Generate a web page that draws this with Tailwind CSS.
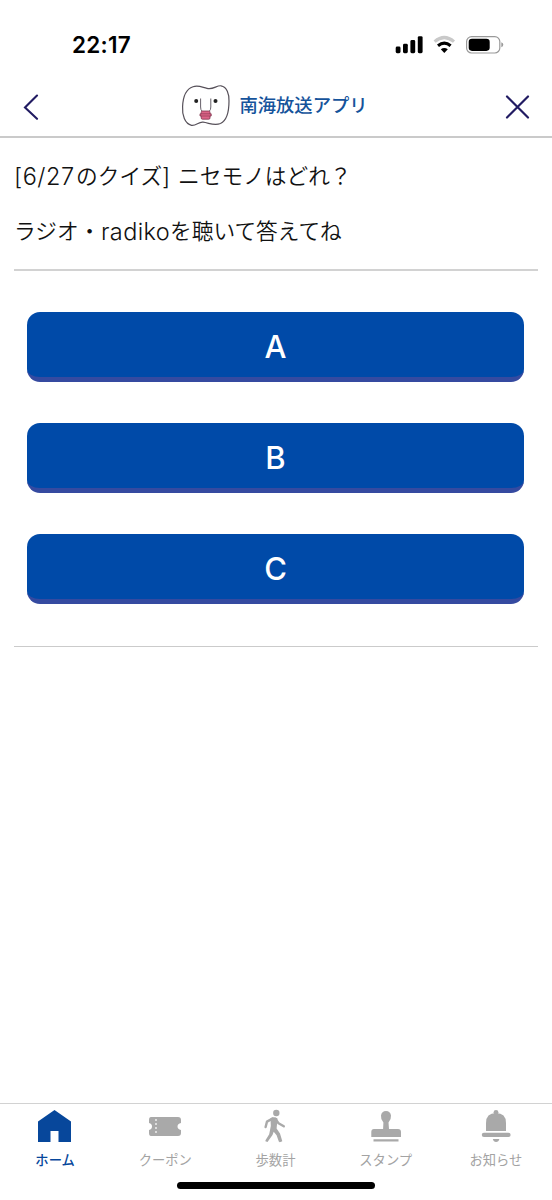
<!DOCTYPE html>
<html lang="ja">
<head>
<meta charset="utf-8">
<title>南海放送アプリ</title>
<script src="https://cdn.jsdelivr.net/npm/@tailwindcss/browser@4"></script>
</head>
<body class="bg-white">
<div class="flex h-[1200px] w-[552px] flex-col overflow-hidden bg-white font-['Noto_Sans_CJK_JP',sans-serif] text-[#111]">
  <div class="flex h-[76px] shrink-0 items-center justify-between pt-[14px] pr-[48px] pl-[72px]">
    <span class="font-[Inter,sans-serif] text-[22.5px] leading-none font-semibold tracking-[.25px] text-black">22:17</span>
    <svg class="h-[20px] w-[109px]" viewBox="395 35 109 20">
      <g fill="#000"><rect x="395.7" y="46.5" width="4.8" height="6.7" rx="1.4"/><rect x="403" y="43.8" width="4.8" height="9.4" rx="1.4"/><rect x="410.4" y="40" width="4.8" height="13.2" rx="1.4"/><rect x="417.8" y="36.2" width="4.8" height="17" rx="1.4"/></g>
      <g fill="none"><path d="M434.6 41.6Q444.3 33.4 454 41.6" stroke="#c9c9c9" stroke-width="3.2"/><path d="M438 45.8Q444.3 40.5 450.6 45.8" stroke="#000" stroke-width="3.1"/></g>
      <path d="M440.8 49.2Q444.3 46.6 447.8 49.2L444.3 53Z" fill="#000"/>
      <rect x="466.6" y="36.6" width="33.2" height="16.4" rx="5" fill="none" stroke="#999" stroke-width="1.2"/>
      <rect x="468.7" y="38.7" width="21" height="12.2" rx="3.3" fill="#000"/>
      <path d="M501.3 42.3q2 .9 2 2.5t-2 2.5z" fill="#999"/>
    </svg>
  </div>
  <header class="flex h-[62px] shrink-0 items-center justify-between border-b-2 border-[#cacaca] pr-[22px] pl-[23px]">
    <svg class="h-[28px] w-[17px]" viewBox="0 0 17 28" fill="none" stroke="#211b62" stroke-width="2.1" stroke-linecap="round"><path d="M14 3.5 2 15.5 14 26.8"/></svg>
    <div class="flex items-center pl-[3px]">
      <svg class="h-[46px] w-[52px]" viewBox="180 83 52 46">
        <path d="M207 88.3C213 90 216.5 85.3 221 85.8C227 86.8 229.2 94 229 101C229 110 226.8 120.5 220.5 123.5C214 126 209 122.8 203 122.2C198.5 121.7 196.2 126 191.5 125.3C184.8 124 182 115 182.6 106.5C183 97 186 89 193 86.7C198.5 85 202 87.2 207 88.3Z" fill="#fff" stroke="#57515a" stroke-width="1.2"/>
        <path d="M200.6 98.5V107Q200.6 110 202 111M210.8 98.5V107Q210.8 110 209.4 111" fill="none" stroke="#67616a" stroke-width="1"/>
        <circle cx="196.2" cy="101" r="2" fill="#222"/><circle cx="215.5" cy="101" r="2" fill="#222"/>
        <path d="M202.4 111H208.8Q210 111 210 112.2V113.8H211.2V116H210V118Q210 119.2 208.8 119.2H202.4Q201.2 119.2 201.2 118V116H200V113.8H201.2V112.2Q201.2 111 202.4 111Z" fill="#dd6488" stroke="#80344d" stroke-width=".8"/>
        <path d="M201 113.8H210.2M201 116H210.2" stroke="#8c3a55" stroke-width=".7"/>
      </svg>
      <span class="mb-[3px] ml-[8px] text-[18.3px] leading-none font-medium text-[#15539b]">南海放送アプリ</span>
    </div>
    <svg class="h-[28px] w-[26px]" viewBox="0 0 26 28" fill="none" stroke="#211b62" stroke-width="2.2" stroke-linecap="round"><path d="M3 4.5 24 25.5M24 4.5 3 25.5"/></svg>
  </header>
  <main class="flex-1 px-[14px]">
    <div class="h-[133px] border-b-2 border-[#d2d2d2] pt-[9px] text-[21.7px] leading-[55px] font-[350] whitespace-nowrap">
      <p class="flex h-[55px]"><span class="w-[62px] pt-[2px] font-[Inter,sans-serif] text-[23.5px] font-[350] tracking-[.5px]">[6/27</span><span class="w-[86px]">のクイズ</span><span class="w-[16px] pt-[2px] font-[Inter,sans-serif] text-[23.5px] font-[350]">]</span><span>ニセモノはどれ？</span></p>
      <p class="flex h-[55px]"><span class="w-[87px]">ラジオ・</span><span class="w-[69px] pt-[2px] font-[Inter,sans-serif] text-[23.5px] font-[350] tracking-[.4px]">radiko</span><span>を聴いて答えてね</span></p>
    </div>
    <div class="flex h-[376px] flex-col gap-[41px] border-b border-[#cbcbcb] px-[13px] pt-[41px] font-[Inter,sans-serif] text-[31px] font-medium text-white">
      <button class="flex h-[70px] w-[497px] items-center justify-center rounded-[13px] border-b-[5px] border-[#354aa0] bg-[#004aa8] pt-[5px]">A</button>
      <button class="flex h-[70px] w-[497px] items-center justify-center rounded-[13px] border-b-[5px] border-[#354aa0] bg-[#004aa8] pt-[5px]">B</button>
      <button class="flex h-[70px] w-[497px] items-center justify-center rounded-[13px] border-b-[5px] border-[#354aa0] bg-[#004aa8] pt-[5px]">C</button>
    </div>
  </main>
  <footer class="flex h-[97px] shrink-0 flex-col items-center border-t border-[#d2d2d2]">
    <nav class="grid h-[78px] w-full grid-cols-5 pr-px text-[13.3px] leading-[20px] text-[#a3a3a3]">
      <div class="flex flex-col items-center pt-[4px] font-medium text-[#07479b]">
        <svg class="h-[38px] w-[44px]" viewBox="0 0 44 38" fill="currentColor"><path d="M5 13.5 21.5 2 38 13.5V34H25.5V23H17.5V34H5Z"/></svg><span class="mt-[4px]">ホーム</span>
      </div>
      <div class="flex flex-col items-center pt-[4px]">
        <svg class="h-[38px] w-[44px]" viewBox="0 0 44 38"><path d="M8 9H35Q38 9 38 12V15Q34.5 15.8 34.5 18.5T38 22V25Q38 28 35 28H8Q6 28 6 25V22Q9 21.2 9 18.5T6 15V12Q6 9 8 9Z" fill="#a9a9a9"/><path d="M13 11V27" stroke="#fff" stroke-width="1.2" stroke-dasharray="2 2"/></svg><span class="mt-[4px]">クーポン</span>
      </div>
      <div class="flex flex-col items-center pt-[4px]">
        <svg class="h-[38px] w-[44px]" viewBox="0 0 44 38"><circle cx="23.3" cy="5" r="3.2" fill="#a9a9a9"/><path d="M19.5 10.6 14 13.6 12.6 19M22.5 11 25.5 15.2 30.8 18.3" fill="none" stroke="#a9a9a9" stroke-width="2.4" stroke-linecap="round" stroke-linejoin="round"/><path d="M17.5 10.3Q21 8 24.5 10.5L23.8 18.5 23.6 20.6 27 25.5 29.3 33.2 26.8 34.2 25.8 33.6 23.6 27.2 20.7 23.8 19.5 27 14.5 34 12.4 33.2 12.5 32.2 16.2 26.3 17.8 18Z" fill="#a9a9a9"/></svg><span class="mt-[4px]">歩数計</span>
      </div>
      <div class="flex flex-col items-center pt-[4px]">
        <svg class="h-[38px] w-[44px]" viewBox="0 0 44 38" fill="#a9a9a9"><path d="M19.1 21 19.4 14.5Q16.5 11 17 7.5Q17.7 3 22 3T27 7.5Q27.4 11 24.5 14.5L25 21H34Q37 21 37 24V29H7.3V24Q7.3 21 10 21ZM9.5 31.2H34.5V33.4H9.5Z"/></svg><span class="mt-[4px]">スタンプ</span>
      </div>
      <div class="flex flex-col items-center pt-[4px]">
        <svg class="h-[38px] w-[44px]" viewBox="0 0 44 38" fill="#a9a9a9"><circle cx="22" cy="4.3" r="2.4"/><path d="M12 23V15Q12 5 22 5T32 15V23Z"/><rect x="7.8" y="24.7" width="28.8" height="4.3" rx="2.1"/><path d="M18.8 31H25.4Q24.7 34 22.1 34T18.8 31Z"/></svg><span class="mt-[4px]">お知らせ</span>
      </div>
    </nav>
    <div class="h-[7px] w-[198px] rounded-full bg-black"></div>
  </footer>
</div>
</body>
</html>
